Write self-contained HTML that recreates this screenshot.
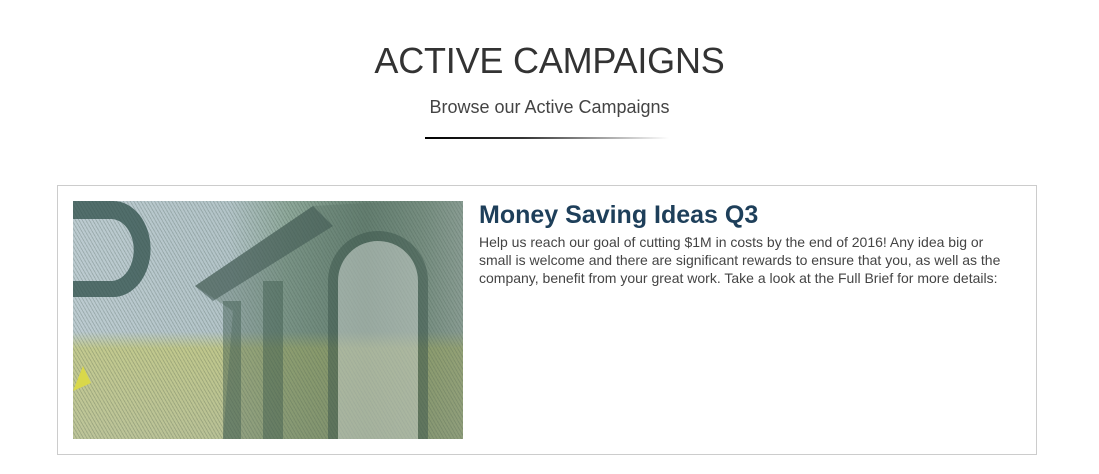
<!DOCTYPE html>
<html><head><style>
*{margin:0;padding:0;box-sizing:border-box}
body{width:1099px;height:474px;background:#fff;font-family:"Liberation Sans",Arial,sans-serif;position:relative;overflow:hidden}
h1{position:absolute;left:0;width:1099px;top:40px;text-align:center;font-weight:normal;font-size:36px;color:#333;letter-spacing:-0.2px}
.sub{position:absolute;left:0;width:1099px;top:97px;text-align:center;font-size:18px;color:#444}
.line{position:absolute;left:425px;top:137px;width:244px;height:2px;background:linear-gradient(90deg,#000 0%,#333 40%,#fff 100%)}
.card{position:absolute;left:57px;top:185px;width:980px;height:270px;border:1px solid #ccc}
.img{position:absolute;left:73px;top:201px;width:390px;height:238px;overflow:hidden;
background:
repeating-linear-gradient(60deg,rgba(40,60,50,.2) 0 1px,transparent 1px 3px),
linear-gradient(180deg,rgba(0,0,0,0) 55%,rgba(200,200,90,.55) 62%,rgba(190,190,100,.5) 100%),
linear-gradient(90deg,#bccbd0 0%,#b3c4c8 40%,#8ea89a 55%,#6a8576 75%,#8aa092 90%,#a9b8b0 100%)}
.t{position:absolute;left:479px;top:201px;font-size:25px;font-weight:bold;color:#1e3f5a}
.d{position:absolute;left:479px;top:233px;width:530px;font-size:14px;line-height:18px;color:#444}
</style></head><body>
<h1>ACTIVE CAMPAIGNS</h1>
<div class="sub">Browse our Active Campaigns</div>
<div class="line"></div>
<div class="card"></div>
<div class="img">
<svg width="390" height="238" style="position:absolute;left:0;top:0">
<path d="M0 0 h40 a36 46 0 0 1 0 96 h-40 v-16 h38 a22 30 0 0 0 0-62 h-38z" fill="#2f4f4a" opacity=".75"/>
<polygon points="122,85 240,5 330,0 390,0 390,238 150,238 160,110" fill="#5a7466" opacity=".4"/>
<polygon points="122,85 240,5 260,25 140,100" fill="#3e5650" opacity=".55"/>
<rect x="150" y="100" width="18" height="138" fill="#3f5a4e" opacity=".45"/>
<rect x="190" y="80" width="20" height="158" fill="#3f5a4e" opacity=".45"/>
<path d="M260 238 V80 a45 45 0 0 1 90 0 V238" fill="#cfd6d2" opacity=".5" stroke="#3c564c" stroke-width="10"/>
<polygon points="10,165 18,182 0,190" fill="#d9d84a"/>
</svg>
</div>
<div class="t">Money Saving Ideas Q3</div>
<div class="d">Help us reach our goal of cutting $1M in costs by the end of 2016! Any idea big or small is welcome and there are significant rewards to ensure that you, as well as the company, benefit from your great work. Take a look at the Full Brief for more details:</div>
</body></html>
